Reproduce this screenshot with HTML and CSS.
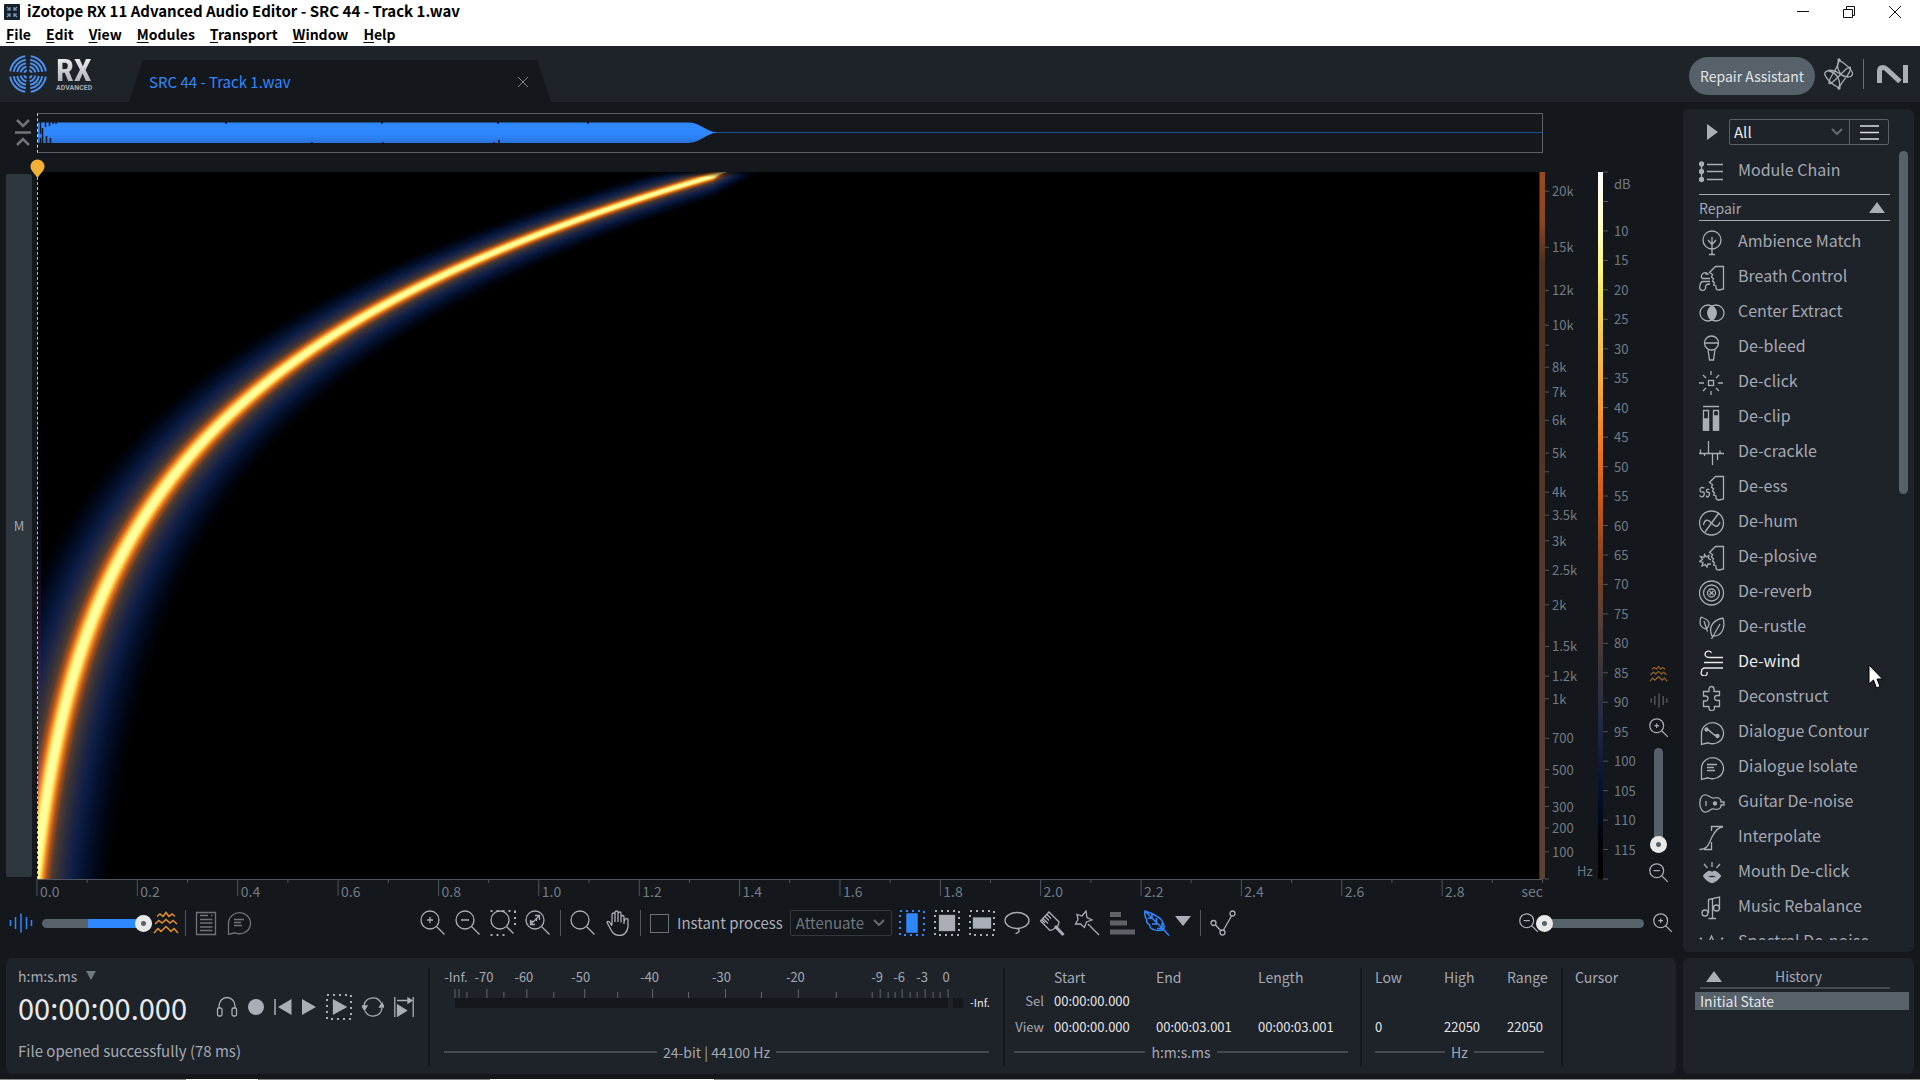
FILE: index.html
```html
<!DOCTYPE html>
<html lang="en">
<head>
<meta charset="utf-8">
<meta name="viewport" content="width=device-width, initial-scale=1">
<title>iZotope RX 11 Advanced Audio Editor - SRC 44 - Track 1.wav</title>
<link rel="stylesheet" href="styles.css">
</head>
<body>
<svg class="sprite" aria-hidden="true">
  <symbol id="zoom-in" viewBox="0 0 26 26"><circle cx="10" cy="10" r="9"/><path d="M16.500 16.500 24.500 24.500M10 7V13M7 10H13"/></symbol>
  <symbol id="zoom-out" viewBox="0 0 26 26"><circle cx="10" cy="10" r="9"/><path d="M16.500 16.500 24.500 24.500M6 10H14"/></symbol>
  <symbol id="waves" viewBox="0 0 26 24"><path d="M1 22 5 17.500 8 20.500 13 15.500 18 20.500 21 17.500 25 22M2 13 6 9.500 9 12 13 8.500 17 12 20 9.500 24 13M4 5.500 7 3 10 5.500 13 1.500 16 5.500 19 3 22 5.500"/></symbol>
  <symbol id="bars" viewBox="0 0 24 20"><path d="M1.500 7V13M6.500 4V16M12 .5V19.500M17.500 4V16M22.500 7V13"/></symbol>
  <symbol id="face" viewBox="0 0 26 26"><path d="M24.500 1.500H16.500L10.500 7.500 13.500 9.500 12.500 12 14.500 14 13.500 16 15.500 18 14.500 20 17 21V23.500Q17.500 25 20 25L24.500 24Z"/></symbol>
  <symbol id="bubble" viewBox="0 0 26 26"><path d="M2.500 24.500V13A11 10.500 0 1 1 9 22.800Z"/></symbol>
</svg>

<div class="app">
  <header class="titlebar">
    <svg class="app-icon" viewBox="0 0 16 16"><rect width="16" height="16" rx="1" fill="#16202c"/><path d="M3 3 6.500 6.500M13 3 9.500 6.500M3 13 6.500 9.500M13 13 9.500 9.500M6 3V6H3M10 3V6H13M6 13V10H3M10 13V10H13" stroke="#7f9ab8" stroke-width="1.200" fill="none"/></svg>
    <h1 class="title">iZotope RX 11 Advanced Audio Editor - SRC 44 - Track 1.wav</h1>
    <div class="window-buttons">
      <button type="button" aria-label="Minimize"><svg viewBox="0 0 14 14"><path d="M1 6.500H13"/></svg></button>
      <button type="button" aria-label="Restore"><svg viewBox="0 0 14 14"><path d="M1.500 4.500H10.500V12.500H1.500ZM4.500 4V1.500H12.500V10.500H11"/></svg></button>
      <button type="button" aria-label="Close"><svg viewBox="0 0 14 14"><path d="M1 1 13 13M13 1 1 13"/></svg></button>
    </div>
  </header>
  <nav class="menubar">
    <a href="#"><u>F</u>ile</a><a href="#"><u>E</u>dit</a><a href="#"><u>V</u>iew</a><a href="#"><u>M</u>odules</a><a href="#"><u>T</u>ransport</a><a href="#"><u>W</u>indow</a><a href="#"><u>H</u>elp</a>
  </nav>

  <div class="topbar">
    <div class="brand">
      <svg class="brand-mark" viewBox="0 0 38 38"><g fill="none" stroke="#4b8fe8" stroke-width="2">
        <circle cx="19" cy="19" r="18" pathLength="4" stroke-dasharray=".8 .2" stroke-dashoffset="-.1"/>
        <circle cx="19" cy="19" r="14.500" pathLength="4" stroke-dasharray=".8 .2" stroke-dashoffset="-.1"/>
        <circle cx="19" cy="19" r="11" pathLength="4" stroke-dasharray=".76 .24" stroke-dashoffset="-.12"/>
        <circle cx="19" cy="19" r="7.500" pathLength="4" stroke-dasharray=".72 .28" stroke-dashoffset="-.14"/>
        <circle cx="19" cy="19" r="4" pathLength="4" stroke-dasharray=".6 .4" stroke-dashoffset="-.2"/></g></svg>
      <div class="brand-text"><span class="brand-name">RX</span><span class="brand-sub">ADVANCED</span></div>
    </div>
    <div class="tab">
      <a class="tab-name" href="#">SRC 44 - Track 1.wav</a>
      <button type="button" class="tab-close" aria-label="Close tab"><svg viewBox="0 0 12 12"><path d="M1 1 11 11M11 1 1 11"/></svg></button>
    </div>
    <div class="topbar-right">
      <button type="button" class="assistant">Repair Assistant</button>
      <svg class="line-icon assistant-icon" viewBox="0 0 30 32"><path d="M15 2C20 5 29 12 28.500 16S21 20 16 16 5 11 1.500 14 8 27 15 30M15 2C15 10 4 20 5 25S26 4 26.500 10 19 21 15 30M15 2C12 8 14 18 24 19M15 30C17 24 14 15 5 13"/><circle class="solid" cx="15" cy="2" r="1"/><circle class="solid" cx="15" cy="30" r="1"/></svg>
      <span class="topbar-rule"></span>
      <svg class="ni-logo" viewBox="0 0 31 18"><path d="M2.500 18V6Q2.500 2.500 6 2.500 8 2.500 10 4.500L23 16.500M28.500 0V18" fill="none" stroke="#a9aeb7" stroke-width="5"/></svg>
    </div>
  </div>

  <div class="workspace">
    <main class="editor">
      <div class="plot-grid">
        <button type="button" class="collapse" aria-label="Collapse overview"><svg viewBox="0 0 18 28"><path d="M3 1 9 7 15 1M1 13.500H17M3 26 9 20 15 26"/></svg></button>
        <div class="overview">
          <svg viewBox="0 0 1504 38" preserveAspectRatio="none"><defs><linearGradient id="wv" x2="0" y2="1"><stop offset=".55" stop-color="#3088ff"/><stop offset="1" stop-color="#2873db"/></linearGradient></defs>
            <path d="M0 18.500H1504" stroke="#1c4f95"/>
            <path d="M0 8.500H651C663 9 667 17 679 18.500 667 20 663 28 651 29H0Z" fill="url(#wv)"/>
            <path d="M2.500 8V20M4.500 14V29M7.500 8V13M8.500 22V29M11.500 8V12M12.500 24V29M15 8V10M18 8V10M2.500 24V29M188 8V10M344 8V10M345 28V30M460 8V10M456 28V30M461 26V30M274 28V30M550 8V10" stroke="#14171b" stroke-width="1.500"/></svg>
        </div>
        <div class="playhead-row"><svg class="playhead" viewBox="0 0 15 20"><path d="M7.500 19.500C5 14 .5 12 .5 7.500A7 7 0 0 1 14.500 7.500C14.500 12 10 14 7.500 19.500Z" fill="#f2b035"/></svg></div>
        <button type="button" class="channel">M</button>
        <div class="spectrogram"><canvas id="spectrogram" aria-label="Spectrogram"></canvas></div>
        <svg class="scale freq-scale" id="freq-scale">
          <defs>
            <linearGradient id="edge" x2="0" y2="1"><stop stop-color="#9a4a1c"/><stop offset=".07" stop-color="#8a4522"/><stop offset=".13" stop-color="#4c3020"/><stop offset="1" stop-color="#5b4233"/></linearGradient>
          </defs>
          <rect width="1" height="100%" fill="#1a2f66"/><rect x="1" width="5" height="100%" fill="url(#edge)"/>
        </svg>
        <svg class="scale db-scale" id="db-scale">
          <defs>
            <linearGradient id="heat" x2="0" y2="1"><stop stop-color="#fff"/><stop offset=".08" stop-color="#ffffc4"/><stop offset=".14" stop-color="#fdf67c"/><stop offset=".17" stop-color="#f6e565"/><stop offset=".25" stop-color="#f5c04c"/><stop offset=".33" stop-color="#f49b33"/><stop offset=".39" stop-color="#ee7622"/><stop offset=".46" stop-color="#cc5a18"/><stop offset=".54" stop-color="#8a451f"/><stop offset=".62" stop-color="#5c4033"/><stop offset=".71" stop-color="#38343c"/><stop offset=".79" stop-color="#1d2745"/><stop offset=".87" stop-color="#04122f"/><stop offset=".95" stop-color="#010206"/><stop offset="1" stop-color="#000"/></linearGradient>
          </defs>
          <rect width="5" height="100%" fill="url(#heat)"/>
        </svg>
        <div class="vertical-tools">
          <svg class="line-icon amber dim" width="19" height="18"><use href="#waves"/></svg>
          <svg class="line-icon grey" width="18" height="15"><use href="#bars"/></svg>
          <button type="button" class="icon-button" aria-label="Zoom in vertically"><svg class="line-icon small" width="20" height="20"><use href="#zoom-in"/></svg></button>
          <input class="slider vertical" type="range" min="0" max="100" value="0" aria-label="Vertical zoom">
          <button type="button" class="icon-button" aria-label="Zoom out vertically"><svg class="line-icon small" width="20" height="20"><use href="#zoom-out"/></svg></button>
        </div>
        <svg class="scale time-scale" id="time-scale"></svg>
      </div>

      <div class="toolbar">
        <div class="tool-group left">
          <svg class="line-icon blue" width="24" height="20"><use href="#bars"/></svg>
          <input class="slider blend" type="range" min="0" max="100" value="100" aria-label="Waveform and spectrogram balance">
          <svg class="line-icon amber" width="26" height="24"><use href="#waves"/></svg>
          <span class="rule"></span>
          <button type="button" class="icon-button" aria-label="Event list"><svg class="line-icon grey" width="22" height="26" viewBox="0 0 22 26"><path d="M1.500 2.500H20.500V24.500H1.500ZM5 5.500H13M16 5.500H17.500M5 9.500H17.500M5 13H17.500M5 17H17.500M5 20.500H17.500"/></svg></button>
          <button type="button" class="icon-button" aria-label="Comments"><svg class="line-icon grey" width="26" height="26" viewBox="0 0 26 26"><use href="#bubble"/><path d="M8 9.500H18M8 12.500H15M8 15.500H16"/></svg></button>
        </div>
        <div class="tool-group middle">
          <button type="button" class="icon-button" aria-label="Zoom in"><svg class="line-icon" width="26" height="26"><use href="#zoom-in"/></svg></button>
          <button type="button" class="icon-button" aria-label="Zoom out"><svg class="line-icon" width="26" height="26"><use href="#zoom-out"/></svg></button>
          <button type="button" class="icon-button" aria-label="Zoom to selection"><svg class="line-icon" width="26" height="26" viewBox="0 0 26 26"><circle cx="10" cy="10" r="9"/><path d="M16.500 16.500 23.500 23.500"/><path class="dots" d="M.5 1H25.500M.5 25H18M25 1V19"/></svg></button>
          <button type="button" class="icon-button" aria-label="Zoom to fit"><svg class="line-icon" width="26" height="26" viewBox="0 0 26 26"><circle cx="10" cy="10" r="9"/><path d="M16.500 16.500 24.500 24.500M6 14 14 6M10 5.500H14.500V10M5.500 10V14.500H10M8.500 11.500H5.500M11.500 8.500V11"/></svg></button>
          <span class="rule"></span>
          <button type="button" class="icon-button" aria-label="Magnifier"><svg class="line-icon" width="26" height="26" viewBox="0 0 26 26"><circle cx="10" cy="10" r="9"/><path d="M16.500 16.500 24.500 24.500"/></svg></button>
          <button type="button" class="icon-button" aria-label="Grab"><svg class="line-icon" width="26" height="26" viewBox="0 0 26 26"><path d="M7 15V4.500Q7 3 8.500 3T10 4.500V12M10 4V2.500Q10 1 11.500 1T13 2.500V12M13 3.500Q13 2 14.500 2T16 3.500V12.500M16 7Q16 5.500 17.500 5.500T19 7V14M19 12 20 9.500Q21 8 23 9V17C22 22 19 25.500 14.500 25.500 9 25.500 7 22 5 18L2 12.500Q2.500 10.500 4.500 12L7 16"/></svg></button>
          <span class="rule"></span>
          <label class="check"><input type="checkbox">Instant process</label>
          <select class="mode" aria-label="Instant process mode"><option>Attenuate</option></select>
          <button type="button" class="icon-button" aria-label="Time selection"><svg class="line-icon blue" width="26" height="26" viewBox="0 0 26 26"><rect class="dots" x="1" y="1" width="24" height="24"/><rect class="solid" x="8" y="4" width="10" height="18"/></svg></button>
          <button type="button" class="icon-button" aria-label="Time and frequency selection"><svg class="line-icon" width="26" height="26" viewBox="0 0 26 26"><rect class="dots" x="1" y="1" width="24" height="24"/><rect class="solid" x="5.500" y="5.500" width="15" height="15"/></svg></button>
          <button type="button" class="icon-button" aria-label="Frequency selection"><svg class="line-icon" width="26" height="26" viewBox="0 0 26 26"><rect class="dots" x="1" y="1" width="24" height="24"/><rect class="solid" x="4.500" y="8" width="17" height="10"/></svg></button>
          <button type="button" class="icon-button" aria-label="Lasso"><svg class="line-icon" width="26" height="26" viewBox="0 0 26 26"><ellipse cx="13" cy="10.500" rx="12" ry="8"/><path d="M13 18.500C17 20 15 23 11.500 23.500"/></svg></button>
          <button type="button" class="icon-button" aria-label="Brush"><svg class="line-icon" width="26" height="26" viewBox="0 0 26 26"><path d="M1.500 11 10 2 20 12 19 16 14 19.500 11 20.500ZM4 8.500 9 13.500M6 6.500 10 10.500M8 4.500 12 8.500M3 10 6 13"/><path d="M16 16 24.500 25" stroke-width="3"/></svg></button>
          <button type="button" class="icon-button" aria-label="Magic wand"><svg class="line-icon" width="26" height="26" viewBox="0 0 26 26"><path d="M12 1 13 7.500 18 10 12.500 12 10.500 17.500 6.500 14 1.500 14 4 9.500 3 4.500 8 6ZM14 14 25 25"/></svg></button>
          <button type="button" class="icon-button" aria-label="Harmonics"><svg class="line-icon" width="26" height="26" viewBox="0 0 26 26"><path d="M1 4.500H12M1 13H18M1 22H26" stroke="#5e6369" stroke-width="5"/></svg></button>
          <span class="feather-group">
            <button type="button" class="icon-button" aria-label="Feather"><svg class="line-icon blue" width="26" height="26" viewBox="0 0 26 26"><path d="M1 1 19 19Q22 22 25 25.500M1 1C0 7 2 8 3 10 1 13 6 14 6 16 6 20 14 21 19 20 22 16 19 15 19 13 18 11 18 9 14 7 11 5 8 3 1 1ZM4 8 8 8.500V4M8 14 12.500 14V8M13 18.500H18V13"/></svg></button>
            <button type="button" class="icon-button" aria-label="Feather options"><svg width="16" height="10" viewBox="0 0 16 10"><path d="M0 0H16L8 10Z" fill="#a9aeb7"/></svg></button>
          </span>
          <span class="rule"></span>
          <button type="button" class="icon-button" aria-label="Clip gain"><svg class="line-icon" width="26" height="26" viewBox="0 0 26 26"><circle cx="3.500" cy="13" r="2.500"/><circle cx="12.500" cy="22.500" r="2.500"/><circle cx="22.500" cy="3.500" r="2.500"/><path d="M5.500 15 10.500 20.500M13.500 20 21.500 6"/></svg></button>
        </div>
        <div class="tool-group right">
          <button type="button" class="icon-button" aria-label="Zoom out horizontally"><svg class="line-icon small" width="20" height="20"><use href="#zoom-out"/></svg></button>
          <input class="slider zoom" type="range" min="0" max="100" value="0" aria-label="Horizontal zoom">
          <button type="button" class="icon-button" aria-label="Zoom in horizontally"><svg class="line-icon small" width="20" height="20"><use href="#zoom-in"/></svg></button>
        </div>
      </div>
    </main>

    <aside class="modules">
      <div class="module-head">
        <button type="button" class="icon-button" aria-label="Preview"><svg width="11" height="16" viewBox="0 0 11 16"><path d="M0 0 11 8 0 16Z" fill="#a9aeb7"/></svg></button>
        <div class="filter">
          <select aria-label="Module filter"><option>All</option></select>
          <button type="button" aria-label="Module menu"><svg width="19" height="15" viewBox="0 0 19 15"><path d="M0 1H19M0 7.500H19M0 14H19" stroke="#dcdfe2" stroke-width="1.500"/></svg></button>
        </div>
      </div>
      <div class="module-scroll">
        <div class="module-list">
          <button type="button" class="module chain"><svg class="line-icon" viewBox="0 0 26 26"><path d="M2.500 5V21M8 5.500H24M8 12.500H24M8 20.500H24"/><circle class="solid" cx="2.500" cy="5" r="2"/><circle class="solid" cx="2.500" cy="12.500" r="2"/><circle class="solid" cx="2.500" cy="20.500" r="2"/></svg>Module Chain</button>
          <h2 class="category">Repair<svg width="16" height="11" viewBox="0 0 16 11"><path d="M0 11 8 0 16 11Z" fill="#a9aeb7"/></svg></h2>
          <button type="button" class="module"><svg class="line-icon" viewBox="0 0 26 26"><circle cx="13" cy="10" r="9"/><path d="M13 7V24M10 24.500H16M9 10 13 14.500 17 10"/></svg>Ambience Match</button>
          <button type="button" class="module"><svg class="line-icon" viewBox="0 0 26 26"><use href="#face"/><path d="M3 13.500A3.800 3.800 0 1 1 9.500 9.500Q8 8 6.500 9.500M3 13.500H11M11 16.500H4Q1 17 1 21A3 3 0 1 0 6.500 21.500Q7 19 11 19"/></svg>Breath Control</button>
          <button type="button" class="module"><svg class="line-icon" viewBox="0 0 26 26"><circle cx="9" cy="13" r="8"/><circle cx="17" cy="13" r="8"/><path class="solid" d="M13 6A8 8 0 0 1 13 20 8 8 0 0 1 13 6"/></svg>Center Extract</button>
          <button type="button" class="module"><svg class="line-icon" viewBox="0 0 26 26"><circle cx="12.500" cy="8" r="7"/><path d="M5.500 8H19.500M9 14.500 10.500 25H14.500L16 14.500"/></svg>De-bleed</button>
          <button type="button" class="module"><svg class="line-icon" viewBox="0 0 26 26"><rect x="9.500" y="10.500" width="5" height="5"/><path d="M12 1V5M12 21V25M0 13H5M19 13H24M4 5 7 8M17 18 20 21M20 5 17 8M7 18 4 21"/></svg>De-click</button>
          <button type="button" class="module"><svg class="line-icon" viewBox="0 0 26 26"><path d="M4 1.500H20M4.500 5.500H9.500V25H4.500ZM14.500 5.500H19.500V25H14.500Z"/><path class="solid" d="M4.500 14H9.500V25H4.500ZM14.500 11H19.500V25H14.500Z"/></svg>De-clip</button>
          <button type="button" class="module"><svg class="line-icon" viewBox="0 0 26 26"><path d="M0 13.500H25M9.500 1V13.500M1.500 9.500V13M13.500 13.500V25M5.500 13V16M18.500 13V20M21 10.500V13"/></svg>De-crackle</button>
          <button type="button" class="module"><svg class="line-icon" viewBox="0 0 26 26"><use href="#face"/><path d="M5.500 13Q1 11.500 1 14.500T3.500 17 5 20 .5 20.500M10.500 14.500Q7.500 13.500 7.500 15.500T9.500 17.500 10 20.500 7 20.500"/></svg>De-ess</button>
          <button type="button" class="module"><svg class="line-icon" viewBox="0 0 26 26"><circle cx="12.500" cy="13" r="12"/><path d="M6 22 19.500 3.500M4.500 15C5.500 9 9 9 12.500 13S19 18 21 12"/></svg>De-hum</button>
          <button type="button" class="module"><svg class="line-icon" viewBox="0 0 26 26"><use href="#face"/><path d="M12 15 9.500 13.500 10 10.500 7.500 12 5.500 9.500 5 12.500 1.500 11.500 3.500 14.500.5 16.500 4 17.500 3 21 6 19.500 8 22 9 19 12 19"/></svg>De-plosive</button>
          <button type="button" class="module"><svg class="line-icon" viewBox="0 0 26 26"><circle cx="12.500" cy="13" r="12"/><circle cx="12.500" cy="13" r="8"/><circle cx="12.500" cy="13" r="4"/><path d="M10.500 11 14.500 15M14.500 11 10.500 15"/></svg>De-reverb</button>
          <button type="button" class="module"><svg class="line-icon" viewBox="0 0 26 26"><path d="M2 2C0 8 1 13 7.500 14 12 9 11 5 2 2M5 6 8.500 16.500M24 3C14 5 9 12 13 21 22 22 27 14 24 3M21 9 12.500 24"/></svg>De-rustle</button>
          <button type="button" class="module active"><svg class="line-icon" viewBox="0 0 26 26"><path d="M24 7.500H11Q6 7.500 6 4A3.500 3.500 0 0 1 12.500 3M5 12.500H24M24 18H6Q2.500 18 2.500 21.500A3 3 0 1 0 8 22"/></svg>De-wind</button>
          <button type="button" class="module"><svg class="line-icon" viewBox="0 0 26 26"><path d="M4.500 6.500H10V4A2.500 2.500 0 0 1 15 4V6.500H20.500V10.500H18A2.500 2.500 0 0 0 18 15.500H20.500V21.500H15.500V23A2.500 2.500 0 0 1 10 23V21.500H4.500V16H6.500A2.500 2.500 0 0 0 6.500 11H4.500Z"/></svg>Deconstruct</button>
          <button type="button" class="module"><svg class="line-icon" viewBox="0 0 26 26"><use href="#bubble"/><circle class="solid" cx="7.500" cy="9.500" r="1.500"/><circle class="solid" cx="18.500" cy="16" r="1.500"/><path d="M7.500 9.500C12 9.500 13 16 18.500 16"/></svg>Dialogue Contour</button>
          <button type="button" class="module"><svg class="line-icon" viewBox="0 0 26 26"><use href="#bubble"/><path d="M8 9.500H18M8 12.500H15M8 15.500H16"/></svg>Dialogue Isolate</button>
          <button type="button" class="module"><svg class="line-icon" viewBox="0 0 26 26"><path d="M.8 13C.8 7 4 4 7.500 5S12 9 15 8 22 8 22 11V12H25V15H22V16C22 19 18 20 15 19S11 21 7.500 22 .8 19 .8 13M7 11V16"/><circle class="solid" cx="16" cy="13.500" r="1.500"/></svg>Guitar De-noise</button>
          <button type="button" class="module"><svg class="line-icon" viewBox="0 0 26 26"><path d="M.5 24.500C9 24.500 10 18 13 12S19 2 24 2M24 1.500H12.500V6M12.500 17V24.500H5"/></svg>Interpolate</button>
          <button type="button" class="module"><svg class="line-icon" viewBox="0 0 26 26"><path d="M13 2V7M5 4 8.500 8M21 4 17.500 8"/><path class="solid" fill-rule="evenodd" d="M4.500 16Q8 11.500 11 11.500L13 12.500 15 11.500Q18 11.500 21.500 16 17 22.500 13 22.500 9 22.500 4.500 16M8 16Q13 20 18 16 13 14 8 16"/></svg>Mouth De-click</button>
          <button type="button" class="module"><svg class="line-icon" viewBox="0 0 26 26"><path d="M9.500 18V4.500L20.500 2V14M13.500 4V23M9.500 23.500H17"/><circle cx="6" cy="18" r="3"/><circle cx="17.500" cy="13" r="3"/></svg>Music Rebalance</button>
          <button type="button" class="module"><svg class="line-icon" viewBox="0 0 26 26"><path class="dots" d="M1 8 6 11H24M24 8 19 11"/><path d="M8 16 12.500 6 17 16"/></svg>Spectral De-noise</button>
        </div>
        <div class="scrollbar"></div>
      </div>
      <svg class="cursor" viewBox="0 0 16 26"><path d="M1 1V20L5.500 16 8.500 24 12 22.500 9 15H14.500Z" fill="#fff" stroke="#000"/></svg>
    </aside>
  </div>

  <footer class="status">
    <div class="status-panel">
      <section class="transport">
        <button type="button" class="unit">h:m:s.ms <svg width="10" height="9" viewBox="0 0 10 9"><path d="M0 0H10L5 9Z" fill="#6f7a80"/></svg></button>
        <div class="transport-row">
          <output class="time">00:00:00.000</output>
          <div class="transport-buttons">
            <button type="button" class="icon-button" aria-label="Monitor"><svg class="line-icon" width="22" height="22" viewBox="0 0 22 22"><path d="M3 12V10A8 8.500 0 0 1 19 10V12"/><rect x="1.500" y="12" width="4.500" height="8" rx="1.500"/><rect x="16" y="12" width="4.500" height="8" rx="1.500"/></svg></button>
            <button type="button" class="icon-button" aria-label="Record"><svg width="16" height="16" viewBox="0 0 16 16"><circle cx="8" cy="8" r="8" fill="#a9aeb7"/></svg></button>
            <button type="button" class="icon-button" aria-label="Rewind"><svg width="18" height="16" viewBox="0 0 18 16"><path d="M1 0V16" stroke="#a9aeb7" stroke-width="1.500"/><path d="M17.500 0V16L4 8Z" fill="#a9aeb7"/></svg></button>
            <button type="button" class="icon-button" aria-label="Play"><svg width="14" height="16" viewBox="0 0 14 16"><path d="M0 0 14 8 0 16Z" fill="#a9aeb7"/></svg></button>
            <button type="button" class="icon-button" aria-label="Play selection"><svg class="line-icon" width="26" height="26" viewBox="0 0 26 26"><rect class="dots" x="1" y="1" width="24" height="24"/><path class="solid" d="M7.500 6 20 13 7.500 20Z"/></svg></button>
            <button type="button" class="icon-button" aria-label="Loop"><svg class="line-icon" width="22" height="22" viewBox="0 0 22 22"><path d="M2 10A9 9 0 0 1 19 7M20 12A9 9 0 0 1 3 15"/><path class="solid" d="M0 10H5L2.500 14ZM17.500 11H22L20 7Z"/></svg></button>
            <button type="button" class="icon-button" aria-label="Play to end"><svg class="line-icon" width="20" height="22" viewBox="0 0 20 22"><path d="M.8 1V21M19.200 1V21M3 4.500H15"/><path class="solid" d="M14 2 18 4.500 14 7ZM3.500 9 12.500 14.500 3.500 20Z"/></svg></button>
          </div>
        </div>
        <p class="message">File opened successfully (78 ms)</p>
      </section>
      <section class="meter">
        <svg class="meter-scale" viewBox="0 0 546 50" id="meter"><rect x="11" y="30" width="494" height="10" fill="#14171b"/><rect x="510" y="30" width="10" height="10" fill="#14171b"/><text class="peak" x="527" y="39">-Inf.</text></svg>
        <div class="ruled">24-bit | 44100 Hz</div>
      </section>
      <section class="selection">
        <table>
          <thead><tr><th></th><th>Start</th><th>End</th><th>Length</th></tr></thead>
          <tbody>
            <tr><th>Sel</th><td>00:00:00.000</td><td></td><td></td></tr>
            <tr><th>View</th><td>00:00:00.000</td><td>00:00:03.001</td><td>00:00:03.001</td></tr>
          </tbody>
        </table>
        <div class="ruled">h:m:s.ms</div>
      </section>
      <section class="range">
        <table>
          <thead><tr><th>Low</th><th>High</th><th>Range</th></tr></thead>
          <tbody>
            <tr><td></td><td></td><td></td></tr>
            <tr><td>0</td><td>22050</td><td>22050</td></tr>
          </tbody>
        </table>
        <div class="ruled">Hz</div>
      </section>
      <section class="pointer">Cursor</section>
    </div>
    <div class="history">
      <h2><svg width="16" height="11" viewBox="0 0 16 11"><path d="M0 11 8 0 16 11Z" fill="#a9aeb7"/></svg>History</h2>
      <a class="history-item" href="#">Initial State</a>
    </div>
  </footer>
  <div class="taskbar-edge"></div>
</div>
<script src="script.js"></script>
</body>
</html>
```
FILE: styles.css
```css
* { box-sizing: border-box; }
body {
  margin: 0;
  background: #14171b;
  color: #a4a9b3;
  font: 14px/20px "Noto Sans CJK SC", "Noto Sans", sans-serif;
}
button, input, select { font: inherit; color: inherit; }
button { background: none; border: 0; padding: 0; }
a { color: inherit; text-decoration: none; }
h1, h2, p { margin: 0; font-weight: 400; }
svg { display: block; flex: none; }
.sprite { display: none; }

.app { display: flex; flex-direction: column; height: 100vh; min-height: 720px; min-width: 1640px; }

/* window chrome */
.titlebar { display: flex; align-items: center; height: 24px; padding-left: 4px; background: #fff; color: #000; }
.app-icon { width: 16px; height: 16px; margin-right: 7px; }
.title { font: 700 15px/22px "Noto Sans CJK KR", sans-serif; margin-bottom: 2px; }
.window-buttons { display: flex; margin-left: auto; padding-right: 2px; }
.window-buttons button { display: grid; place-items: center; width: 46px; height: 22px; }
.window-buttons svg { width: 14px; height: 14px; fill: none; stroke: #111; }
.menubar { display: flex; gap: 15px; height: 22px; padding-left: 6px; background: #fff; color: #000; font: 700 14px/20px "Noto Sans CJK KR", sans-serif; }
.menubar u { text-underline-offset: 2px; }

/* top bar */
.topbar { display: flex; align-items: flex-end; height: 56px; background: #1e2229; }
.brand { display: flex; align-items: center; gap: 9px; width: 129px; height: 56px; padding-left: 9px; }
.brand-mark { width: 38px; height: 38px; }
.brand-text { display: flex; flex-direction: column; }
.brand-name { font: 700 32px/28px "Liberation Sans Narrow", "Roboto Condensed", "Noto Sans CJK SC", sans-serif; background: linear-gradient(#f2f2f2, #a9adb3); background-clip: text; color: transparent; }
.brand-sub { font: 700 7px/8px "Liberation Sans Narrow", "Roboto", sans-serif; }
.tab { display: flex; align-items: center; justify-content: space-between; width: 422px; height: 42px; padding: 2px 22px 0 20px; background: #14171b; clip-path: polygon(14px 0, 408px 0, 100% 100%, 0 100%); }
.tab-name { color: #3088ff; font-size: 15px; }
.tab-close svg { width: 12px; height: 12px; stroke: #7d838b; }
.topbar-right { display: flex; align-items: center; height: 56px; margin-left: auto; padding-right: 12px; }
.assistant { height: 38px; margin-top: 4px; padding: 0 11px; border-radius: 19px; background: #56616a; color: #e2e5e8; }
.assistant-icon { width: 30px; height: 32px; margin: 0 9px; }
.topbar-rule { width: 1px; height: 30px; margin-right: 13px; background: #6a6f77; }
.ni-logo { width: 31px; height: 18px; }

/* shared icon looks */
.line-icon { fill: none; stroke: #a9aeb7; stroke-width: 1.3; --solid: #a9aeb7; }
.line-icon.small { stroke-width: 1.6; }
.line-icon.blue { stroke: #3088ff; stroke-width: 1.5; --solid: #3088ff; }
.line-icon.amber { stroke: #e8912a; stroke-width: 1.5; }
.line-icon.grey { stroke: #6f747a; }
.line-icon.dim { opacity: .65; }
.solid { fill: var(--solid); }
.dots { stroke-dasharray: 2 4; stroke-width: 2; }
.icon-button { display: grid; place-items: center; }

/* workspace */
.workspace { display: flex; flex: 1; gap: 7px; min-height: 0; padding: 0 6px; }
.editor { display: flex; flex: 1; flex-direction: column; min-width: 0; padding: 11px 0; }
.plot-grid { display: grid; flex: 1; min-height: 0; grid-template: 40px 19px minmax(0, 1fr) 26px / 31px minmax(0, 1fr) 59px 45px 33px; }
.collapse { display: grid; place-items: center; padding-left: 2px; }
.collapse svg { width: 18px; height: 28px; fill: none; stroke: #6f747a; stroke-width: 2.5; }
.overview { grid-column: 2; margin-right: -4px; border: 1px solid #5c6068; border-left: 1px dashed #e9d94a; }
.overview svg { width: 100%; height: 38px; }
.playhead-row { grid-area: 2 / 2; padding-top: 6px; z-index: 1; }
.playhead { width: 15px; height: 20px; margin-left: -7px; }
.channel { grid-area: 3 / 1; margin: 2px 5px 2px 0; border-radius: 2px; background: #2e363e; font-size: 13px; }
.spectrogram { grid-area: 3 / 2; position: relative; border-left: 1px dashed #d9c844; background: #000; }
.spectrogram canvas { position: absolute; inset: 0; width: 100%; height: 100%; }
.scale { width: 100%; height: 100%; overflow: visible; stroke: none; fill: #717c86; font-size: 13px; }
.scale line { stroke: #4d565e; }
.freq-scale { grid-area: 3 / 3; }
.db-scale { grid-area: 3 / 4; }
.time-scale { grid-area: 4 / 2; width: calc(100% + 4px); font-size: 14px; }
.vertical-tools { grid-area: 3 / 5; display: flex; flex-direction: column; align-items: center; justify-content: flex-end; gap: 10px; margin-bottom: -4px; padding-right: 2px; }

.slider { appearance: none; margin: 0; height: 17px; background: none; }
.slider::-webkit-slider-runnable-track { height: 9px; border-radius: 5px; background: #56616a; }
.slider::-webkit-slider-thumb { appearance: none; width: 17px; height: 17px; margin-top: -4px; border-radius: 50%; background: radial-gradient(circle, #56616a 2px, #e9e9e9 3px); }
.slider.blend { width: 110px; }
.slider.blend::-webkit-slider-runnable-track { background: linear-gradient(90deg, #56616a 42%, #3088ff 42%); }
.slider.zoom { width: 108px; }
.slider.vertical { writing-mode: vertical-lr; direction: rtl; width: 17px; height: 105px; }
.slider.vertical::-webkit-slider-runnable-track { width: 9px; height: 100%; }
.slider.vertical::-webkit-slider-thumb { margin: 0 -4px; }

.toolbar { display: flex; align-items: center; height: 36px; padding-left: 3px; }
.tool-group { display: flex; align-items: center; gap: 9px; }
.tool-group.left { width: 411px; }
.left .amber { margin: 0 -3px 0 -8px; }
.tool-group.right { gap: 0; margin-left: auto; padding-right: 3px; }
.right .slider { margin: 0 9px 0 -3px; }
.rule { width: 1px; height: 26px; background: #51575d; }
.check { display: flex; align-items: center; gap: 8px; color: #a9aeb7; font-size: 15px; }
.check input { appearance: none; width: 19px; height: 19px; margin: 0; border: 1px solid #687078; }
select { appearance: none; border: 1px solid #33383e; border-radius: 2px; background: url("data:image/svg+xml,%3Csvg xmlns='http://www.w3.org/2000/svg' viewBox='0 0 12 8'%3E%3Cpath d='M1 1 6 6 11 1' fill='none' stroke='%23636a72' stroke-width='2'/%3E%3C/svg%3E") no-repeat right 6px center / 12px 8px; }
.mode { width: 102px; height: 26px; margin: 0 -2px; padding: 0 5px; color: #71767c; font-size: 15px; }
.feather-group { display: flex; align-items: center; gap: 5px; }
.feather-group svg[width="16"] { margin-bottom: 5px; }

/* module sidebar */
.modules { position: relative; display: flex; flex-direction: column; width: 231px; margin-top: 7px; padding: 10px 6px 12px 16px; border-radius: 6px; background: #1e2229; }
.module-head { display: flex; justify-content: space-between; align-items: center; padding: 0 19px 0 8px; }
.filter { display: flex; width: 160px; height: 26px; border: 1px solid #56616a; border-radius: 2px; }
.filter select { flex: 1; border: 0; padding: 0 4px; color: #e6e8ea; font-size: 15px; }
.filter button { display: grid; place-items: center; width: 39px; border-left: 1px solid #56616a; }
.module-scroll { display: flex; flex: 1; gap: 9px; min-height: 0; margin-top: 6px; }
.module-list { flex: 1; overflow: hidden; }
.module { display: flex; align-items: center; gap: 13px; width: 100%; height: 35px; text-align: left; font-size: 16px; white-space: nowrap; }
.module svg { width: 26px; height: 26px; margin-top: 6px; }
.module.chain { height: 36px; }
.module.active { color: #e8eaec; }
.module.active svg { stroke: #e8eaec; }
.category { display: flex; align-items: center; justify-content: space-between; height: 27px; margin: 7px 0 1px; padding-right: 5px; border: solid #a4a9b3; border-width: 1px 0; font-size: 14px; }
.scrollbar { width: 9px; height: 343px; border-radius: 5px; background: #56616a; }
.cursor { position: absolute; left: 185px; top: 555px; width: 16px; height: 26px; }

/* status area */
.status { display: flex; gap: 7px; height: 127px; padding: 6px 6px 5px; }
.status-panel { display: flex; flex: 1; padding: 10px 0 8px 12px; border-radius: 6px; background: #1e2229; }
.status-panel section { border-right: 2px solid #14171b; }
.transport { display: flex; flex-direction: column; width: 412px; }
.unit { display: flex; align-items: center; gap: 9px; height: 15px; }
.transport-row { display: flex; align-items: center; justify-content: space-between; height: 36px; margin-top: 6px; padding-right: 14px; }
.time { color: #e8eaec; font-size: 29px; line-height: 36px; }
.transport-buttons { display: flex; align-items: center; gap: 10px; }
.message { margin-top: 16px; font-size: 15px; }
.meter { display: flex; flex: 1; flex-direction: column; justify-content: space-between; padding: 0 14px; }
.meter-scale { width: 100%; height: 50px; fill: #a4a9b3; font-size: 13px; }
.meter-scale line { stroke: #60656d; }
.meter-scale .peak { fill: #e6e8ea; font-size: 11px; }
.meter-scale { overflow: visible; }
.ruled { display: flex; align-items: center; gap: 6px; height: 20px; margin-bottom: 4px; font-size: 14px; white-space: nowrap; }
.ruled::before, .ruled::after { content: ""; flex: 1; height: 2px; background: #454a51; }
.selection, .range { display: flex; flex-direction: column; justify-content: space-between; font-size: 13px; }
.selection { width: 357px; padding: 0 0 0 9px; }
.selection .ruled { margin-right: 12px; }
.range { width: 201px; padding: 0 17px 0 13px; }
.pointer { width: 113px; padding-left: 12px; font-size: 14px; line-height: 18px; }
.status-panel .pointer { border: 0; }
table { border-collapse: collapse; table-layout: fixed; width: 100%; }
th, td { height: 26px; padding: 0; font-weight: 400; text-align: left; line-height: 18px; }
thead th { height: 20px; vertical-align: top; font-size: 14px; }
td { color: #e2e5e8; }
.selection th:first-child { width: 40px; padding-right: 10px; text-align: right; }
.range th:first-child { width: 69px; }
.range th:nth-child(2) { width: 63px; }
.history { width: 231px; padding: 10px 5px 0 12px; border-radius: 6px; background: #1e2229; }
.history h2 { display: flex; align-items: center; height: 21px; margin: 0 19px 3px 5px; padding: 0 0 3px 6px; border-bottom: 2px solid #454a51; gap: 53px; font-size: 14px; }
.history-item { display: block; padding-left: 5px; background: #56616a; color: #e2e5e8; font-size: 14px; line-height: 18px; }
.taskbar-edge { height: 1px; margin-top: auto; background: linear-gradient(90deg, #8a8a8a 0 186px, #fff 186px 258px, #8a8a8a 258px 490px, #fff 490px 714px, #8a8a8a 714px); }
```
FILE: script.js
```js
const SVG_NS = "http://www.w3.org/2000/svg";

function add(parent, name, attrs, text) {
  const node = document.createElementNS(SVG_NS, name);
  for (const key in attrs) node.setAttribute(key, attrs[key]);
  if (text) node.textContent = text;
  parent.appendChild(node);
}

// Frequency axis is mel spaced from 0 Hz (bottom) to Nyquist (top).
const NYQUIST = 22050;
const mel = f => Math.log(1 + f / 700);
const percent = v => (v * 100).toFixed(2) + "%";

const freq = document.getElementById("freq-scale");
const freqLabels = [[20000, "20k"], [15000, "15k"], [12000, "12k"], [10000, "10k"], [9000, ""], [8000, "8k"], [7000, "7k"], [6000, "6k"], [5000, "5k"], [4500, ""], [4000, "4k"], [3500, "3.5k"], [3000, "3k"], [2500, "2.5k"], [2000, "2k"], [1500, "1.5k"], [1200, "1.2k"], [1000, "1k"], [700, "700"], [500, "500"], [400, ""], [300, "300"], [200, "200"], [100, "100"], [0, ""]];
for (const [f, label] of freqLabels) {
  const y = percent(1 - mel(f) / mel(NYQUIST));
  add(freq, "line", { x1: 6, x2: 10, y1: y, y2: y });
  if (label) add(freq, "text", { x: 13, y, dy: 5 }, label);
}
add(freq, "text", { x: 38, y: "100%", dy: -3 }, "Hz");

const db = document.getElementById("db-scale");
for (let v = 0; v <= 120; v += 5) {
  const y = percent(v / 120);
  add(db, "line", { x1: 5, x2: 10, y1: y, y2: y });
  if (v >= 10 && v < 120) add(db, "text", { x: 16, y, dy: 5 }, String(v));
}
add(db, "text", { x: 16, y: 17 }, "dB");

const time = document.getElementById("time-scale");
const DURATION = 3.001;
add(time, "line", { x1: 0, x2: "100%", y1: 0.5, y2: 0.5 });
for (let i = 0; i <= 30; i++) {
  const x = percent(i / 10 / DURATION);
  add(time, "line", { x1: x, x2: x, y1: 0, y2: i % 2 || i === 30 ? 4 : 17 });
  if (i % 2 === 0 && i < 30) add(time, "text", { x, dx: 3, y: 18 }, (i / 10).toFixed(1));
}
add(time, "text", { x: "100%", y: 18, "text-anchor": "end" }, "sec");

const meter = document.getElementById("meter");
for (const x of [11, 15, 43, 83, 141, 209, 282, 355, 437, 459, 482, 505]) add(meter, "line", { x1: x, x2: x, y1: 21, y2: 30 });
for (const x of [23, 60, 110, 174, 245, 318, 393, 429, 445, 452, 467, 474, 490, 497]) add(meter, "line", { x1: x, x2: x, y1: 24, y2: 30 });
for (const [x, label] of [[12, "-Inf."], [40, "-70"], [80, "-60"], [137, "-50"], [206, "-40"], [278, "-30"], [352, "-20"], [434, "-9"], [456, "-6"], [479, "-3"], [503, "0"]])
  add(meter, "text", { x, y: 14, "text-anchor": "middle" }, label);

// Spectrogram colour by horizontal distance from the sweep, in pixels.
const ramp = [[0, 255, 255, 170], [3, 255, 250, 135], [5, 255, 200, 75], [7, 240, 130, 35], [10, 165, 80, 28], [14, 88, 60, 46], [20, 54, 50, 56], [28, 32, 38, 68], [37, 12, 28, 68], [48, 4, 17, 46], [60, 1, 7, 22], [74, 0, 0, 0]];
function shade(d) {
  for (let i = 1; i < ramp.length; i++) {
    if (d < ramp[i][0]) {
      const a = ramp[i - 1], b = ramp[i], k = (d - a[0]) / (b[0] - a[0]);
      return [1, 2, 3].map(c => a[c] + (b[c] - a[c]) * k);
    }
  }
  return [0, 0, 0];
}

function drawSpectrogram() {
  const canvas = document.getElementById("spectrogram");
  const w = canvas.width = canvas.clientWidth;
  const h = canvas.height = canvas.clientHeight;
  const ctx = canvas.getContext("2d");
  const image = ctx.createImageData(w, h);
  const scale = w / 1501;
  for (let y = 0; y < h; y++) {
    const m = (h - y) / h * mel(NYQUIST);
    const f = 700 * (Math.exp(m) - 1);
    const center = -3 + f * 0.0313;
    const core = 1.1 + 0.4 * (1 - y / h);
    const fade = Math.min(1, (y + 3) / 8);
    const limit = Math.min(w, Math.ceil((center + 80) * scale));
    for (let x = 0; x < limit; x++) {
      let d = Math.abs(x / scale - center);
      d = d < 12 * core ? d / core : 12 + (d - 12 * core) * 58 / (70 - 12 * core);
      const past = x / scale - 675;
      if (past > 0 && x / scale > center) d += past * 0.9;
      const c = shade(d);
      // broadband onset at the very start of the file
      if (x < 3) {
        const k = Math.max(0, y / h - 0.3) * 1.4;
        c[0] = Math.max(c[0], 120 * k * k);
        c[1] = Math.max(c[1], 60 * k * k);
        c[2] = Math.max(c[2], 80 * k);
      }
      const p = (y * w + x) * 4;
      image.data[p] = c[0] * fade;
      image.data[p + 1] = c[1] * fade;
      image.data[p + 2] = c[2] * fade;
      image.data[p + 3] = 255;
    }
  }
  ctx.putImageData(image, 0, 0);
}
drawSpectrogram();
window.addEventListener("resize", drawSpectrogram);
```
